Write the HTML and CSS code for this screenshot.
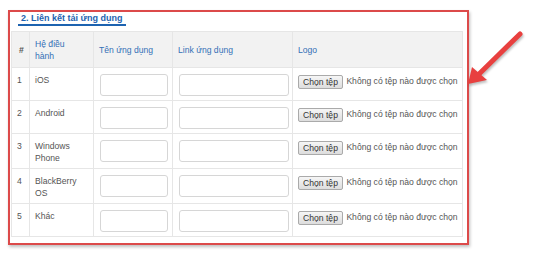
FILE: index.html
```html
<!DOCTYPE html>
<html>
  <head>
    <meta charset="utf-8">
    <title>Liên kết tải ứng dụng</title>
    <link rel="stylesheet" href="styles.css">
  </head>
  <body>
    <div class="panel">
      <h2 class="section-title">2. Liên kết tải ứng dụng</h2>

      <table class="app-table">
        <thead>
          <tr>
            <th class="col-no">#</th>
            <th class="col-os">Hệ điều<br>hành</th>
            <th class="col-name">Tên ứng dụng</th>
            <th class="col-link">Link ứng dụng</th>
            <th class="col-logo">Logo</th>
          </tr>
        </thead>
        <tbody>
          <tr>
            <td>1</td>
            <td>iOS</td>
            <td><input class="text-input" type="text"></td>
            <td><input class="text-input wide" type="text"></td>
            <td><span class="file-pick"><button class="file-btn">Chọn tệp</button> Không có tệp nào được chọn</span></td>
          </tr>
          <tr>
            <td>2</td>
            <td>Android</td>
            <td><input class="text-input" type="text"></td>
            <td><input class="text-input wide" type="text"></td>
            <td><span class="file-pick"><button class="file-btn">Chọn tệp</button> Không có tệp nào được chọn</span></td>
          </tr>
          <tr>
            <td>3</td>
            <td>Windows<br>Phone</td>
            <td><input class="text-input" type="text"></td>
            <td><input class="text-input wide" type="text"></td>
            <td><span class="file-pick"><button class="file-btn">Chọn tệp</button> Không có tệp nào được chọn</span></td>
          </tr>
          <tr>
            <td>4</td>
            <td>BlackBerry<br>OS</td>
            <td><input class="text-input" type="text"></td>
            <td><input class="text-input wide" type="text"></td>
            <td><span class="file-pick"><button class="file-btn">Chọn tệp</button> Không có tệp nào được chọn</span></td>
          </tr>
          <tr>
            <td>5</td>
            <td>Khác</td>
            <td><input class="text-input" type="text"></td>
            <td><input class="text-input wide" type="text"></td>
            <td><span class="file-pick"><button class="file-btn">Chọn tệp</button> Không có tệp nào được chọn</span></td>
          </tr>
        </tbody>
      </table>
    </div>

    <!-- annotation arrow pointing at the panel -->
    <svg class="arrow" width="549" height="263" viewBox="0 0 549 263">
      <line x1="520" y1="34" x2="476" y2="77" stroke="#e8403f" stroke-width="5" stroke-linecap="round" />
      <polygon points="468,84 472,67 487,80" fill="#e8403f" />
    </svg>
  </body>
</html>
```

FILE: styles.css
```css
*,
*::before,
*::after {
  box-sizing: border-box;
}

body {
  margin: 0;
  background-color: #ffffff;
  font-family: "Liberation Sans", Arial, sans-serif;
  font-size: 8.6px;
  color: #555555;
  position: relative;
  width: 549px;
  height: 263px;
  overflow: hidden;
}

.panel {
  margin: 10px 0 0 8px;
  width: 461px;
  border: 2px solid #dc4a4a;
  padding: 0 4px 6px 1px;
  box-shadow: 1px 2px 3px rgba(0, 0, 0, 0.25);
}

.section-title {
  display: inline-block;
  margin: 1px 0 5px 7px;
  padding: 0 3px;
  font-size: 9px;
  line-height: 11px;
  font-weight: bold;
  color: #1d63b0;
  border-bottom: 2px solid #1d63b0;
}

.app-table {
  width: 452px;
  border-collapse: collapse;
  table-layout: fixed;
}

.app-table th,
.app-table td {
  border: 1px solid #e6e6e6;
  text-align: left;
  padding: 5px 5px 6px;
  line-height: 12px;
}

.app-table th {
  height: 36px;
  background-color: #f2f2f2;
  color: #3470b6;
  font-weight: normal;
  vertical-align: middle;
  padding-top: 0;
  padding-bottom: 0;
}

.app-table th.col-no {
  color: #555555;
  font-weight: bold;
  padding-left: 7px;
}

.app-table td {
  vertical-align: top;
  padding-top: 6px;
  padding-bottom: 4px;
}

.col-no { width: 18px; }
.col-os { width: 64px; }
.col-name { width: 79px; }
.col-link { width: 120px; }

.text-input {
  display: block;
  width: 68px;
  height: 22px;
  margin: 0 0 0 1px;
  border: 1px solid #d6d6d6;
  border-radius: 3px;
  background: #ffffff;
}

.text-input.wide {
  width: 110px;
}

.file-pick {
  display: block;
  white-space: nowrap;
  margin-top: 1px;
  line-height: 13px;
}

.file-btn {
  display: inline-block;
  height: 14px;
  width: 45px;
  padding: 0;
  margin: 0 1px 0 0;
  font-family: "Liberation Sans", Arial, sans-serif;
  font-size: 8.6px;
  color: #333333;
  border: 1px solid #aaaaaa;
  border-radius: 2px;
  background: linear-gradient(#f6f6f6, #dddddd);
  vertical-align: top;
}

.arrow {
  position: absolute;
  left: 0;
  top: 0;
  pointer-events: none;
  filter: drop-shadow(1px 2px 1px rgba(0, 0, 0, 0.25));
}
```
